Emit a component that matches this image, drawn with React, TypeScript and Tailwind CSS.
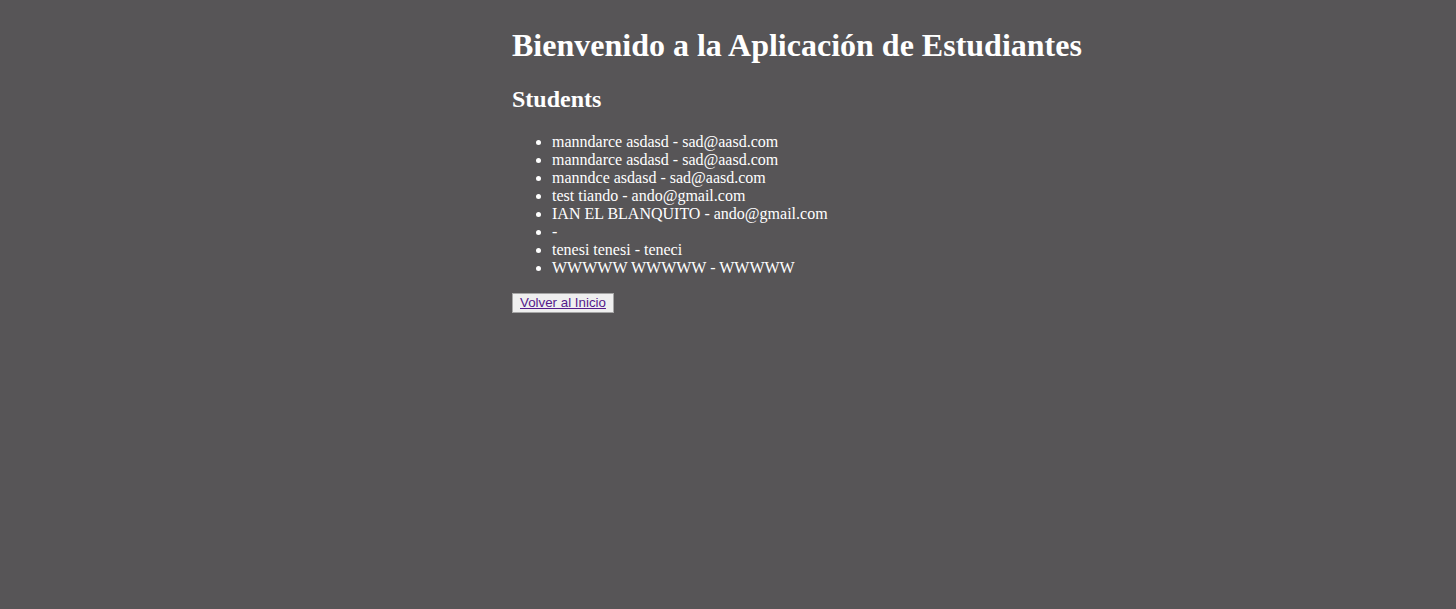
export default function App() {
  const students = [
    'manndarce asdasd - sad@aasd.com',
    'manndarce asdasd - sad@aasd.com',
    'manndce asdasd - sad@aasd.com',
    'test tiando - ando@gmail.com',
    'IAN EL BLANQUITO - ando@gmail.com',
    ' - ',
    'tenesi tenesi - teneci',
    'WWWWW WWWWW - WWWWW',
  ]

  return (
    <div className="min-h-[609px] bg-[#575557] font-['Liberation_Serif',serif] text-white [line-height:normal]">
      <div className="ml-[512px] pt-[6px]">
        <h1 className="my-[21.44px] text-[32px] font-bold [line-height:normal]">
          Bienvenido a la Aplicación de Estudiantes
        </h1>
        <h2 className="my-[19.92px] text-[24px] font-bold [line-height:normal]">Students</h2>
        <ul className="my-4 list-disc pl-10 text-base [line-height:normal]">
          {students.map((s, i) => (
            <li key={i}>{s}</li>
          ))}
        </ul>
        <button className="h-[20px] border border-[#a6a6a6] bg-[#efefef] px-[7px] font-['Liberation_Sans',sans-serif] text-[13.33px] [line-height:normal]">
          <a href="#" className="text-[#551a8b] underline">
            Volver al Inicio
          </a>
        </button>
      </div>
    </div>
  )
}
